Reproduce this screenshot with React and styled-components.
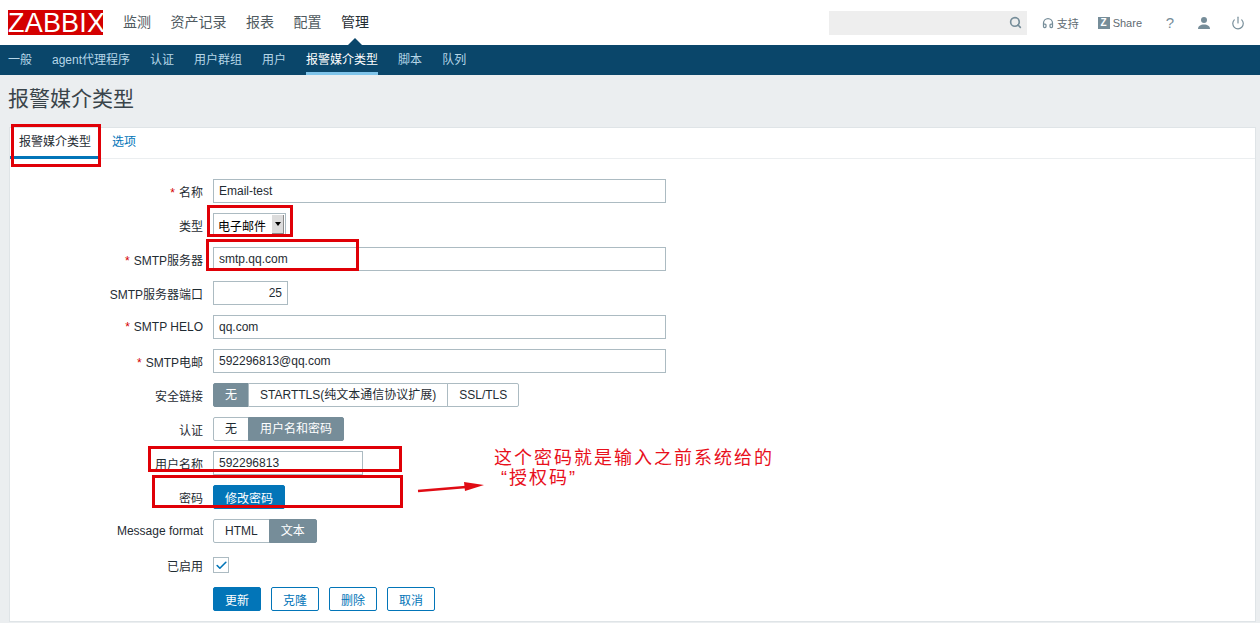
import React from "react";
import styled, { createGlobalStyle } from "styled-components";
import { Search, Headphones, Power, Check } from "lucide-react";

const GlobalStyle = createGlobalStyle`
  html, body {
    margin: 0;
    height: 623px;
    overflow: hidden;
    background: #ebeef0;
    font-family: "Liberation Sans", "Noto Sans CJK SC", sans-serif;
    font-size: 12px;
    color: #1f2c33;
  }
  * { box-sizing: border-box; }
`;

const Page = styled.div`
  position: relative;
  width: 1260px;
  height: 623px;
  overflow: hidden;
`;

const TopBar = styled.header`
  height: 45px;
  background: #fff;
  display: flex;
  align-items: center;
  padding: 0 12px 0 8px;
`;
const Logo = styled.div`
  width: 95px;
  height: 25px;
  margin-top: -1px;
  background: #d40000;
  color: #fff;
  font-size: 27px;
  line-height: 26px;
  letter-spacing: 0.2px;
  text-align: center;
  overflow: hidden;
`;
const MainMenu = styled.nav`
  display: flex;
  gap: 19.5px;
  margin-left: 20px;
`;
const MainItem = styled.a`
  position: relative;
  font-size: 14px;
  line-height: 45px;
  color: ${p => (p.$active ? "#1f2c33" : "#4f5a60")};
  ${p =>
    p.$active &&
    `&::after {
      content: "";
      position: absolute;
      left: 50%;
      bottom: 0;
      margin-left: -7px;
      border: 7px solid transparent;
      border-top: 0;
      border-bottom-color: #0a466a;
    }`}
`;
const TopRight = styled.div`
  margin-left: auto;
  display: flex;
  align-items: center;
`;
const SearchBox = styled.div`
  width: 198px;
  height: 24px;
  background: #eeeeee;
  display: flex;
  align-items: center;
  justify-content: flex-end;
  padding-right: 5px;
  color: #768d99;
  margin-right: 15px;
`;
const HeadLink = styled.a`
  display: flex;
  align-items: center;
  gap: 3px;
  font-size: 11px;
  color: #768d99;
  margin-right: ${p => p.$gap}px;
  span { color: #5f6b72; }
`;
const ZBadge = styled.i`
  width: 12px;
  height: 12px;
  background: #768d99;
  color: #fff;
  font-style: normal;
  font-weight: bold;
  font-size: 10px;
  line-height: 12px;
  text-align: center;
`;
const HeadIcon = styled.a`
  width: 20px;
  display: flex;
  justify-content: center;
  color: #768d99;
  font-size: 15px;
  margin-left: ${p => p.$gap || 0}px;
`;

const SubBar = styled.nav`
  height: 30px;
  background: #0a466a;
  display: flex;
  gap: 20px;
  padding-left: 8px;
`;
const SubItem = styled.a`
  font-size: 12px;
  line-height: 30px;
  height: 30px;
  color: ${p => (p.$active ? "#fff" : "#b5d6e8")};
  border-bottom: 3px solid ${p => (p.$active ? "#7fc4ea" : "transparent")};
`;

const Title = styled.h1`
  margin: 0;
  padding: 11px 0 0 8px;
  height: 52px;
  font-size: 21px;
  line-height: 26px;
  font-weight: normal;
  color: #3a444a;
`;

const Card = styled.section`
  margin-left: 9px;
  margin-right: 4px;
  height: 495px;
  background: #fff;
  border: 1px solid #dfe4e7;
`;
const Tabs = styled.div`
  height: 31px;
  display: flex;
  border-bottom: 1px solid #ebeef0;
`;
const Tab = styled.a`
  height: 31px;
  padding: 0 9px;
  margin-right: 3px;
  line-height: 29px;
  font-size: 12px;
  color: ${p => (p.$active ? "#1f2c33" : "#0275b8")};
  border-bottom: 3px solid ${p => (p.$active ? "#0275b8" : "transparent")};
`;
const Form = styled.div`
  padding-top: 15px;
  display: flex;
  flex-direction: column;
`;
const Row = styled.div`
  display: grid;
  grid-template-columns: 193px 1fr;
  column-gap: 10px;
  align-items: center;
  height: 34px;
`;
const Label = styled.label`
  text-align: right;
  font-size: 12px;
  color: #1f2c33;
`;
const Req = styled.span`
  color: #d40000;
  margin-right: 4px;
`;
const Input = styled.div`
  width: ${p => p.$w || 453}px;
  height: 24px;
  border: 1px solid #acbbc2;
  padding: 0 5px;
  font-size: 12px;
  line-height: 22px;
  color: #1f2c33;
  text-align: ${p => (p.$right ? "right" : "left")};
`;
const SelectBox = styled.div`
  width: 73px;
  height: 24px;
  border: 1px solid #acbbc2;
  display: flex;
  align-items: center;
  justify-content: space-between;
  padding: 1px 1px 1px 4px;
  font-size: 12px;
  color: #000;
`;
const SelectArrow = styled.i`
  width: 12px;
  height: 20px;
  background: #dcdcdc;
  border-right: 1px solid #8a8a8a;
  border-bottom: 2px solid #8a8a8a;
  display: flex;
  align-items: center;
  justify-content: center;
  &::before {
    content: "";
    border: 3px solid transparent;
    border-top: 4px solid #000;
    border-bottom: 0;
  }
`;
const Segments = styled.div`
  display: flex;
`;
const Segment = styled.span`
  height: 24px;
  padding: 0 ${p => p.$pad || 11}px;
  line-height: 22px;
  font-size: 12px;
  border: 1px solid ${p => (p.$on ? "#768d99" : "#acbbc2")};
  margin-left: -1px;
  background: ${p => (p.$on ? "#768d99" : "#fff")};
  color: ${p => (p.$on ? "#fff" : "#1f2c33")};
  &:first-child { margin-left: 0; border-radius: 2px 0 0 2px; }
  &:last-child { border-radius: 0 2px 2px 0; }
`;
const PrimaryBtn = styled.button`
  height: 24px;
  width: ${p => p.$w}px;
  padding: 0;
  font: inherit;
  font-size: 12px;
  border: 1px solid #0275b8;
  border-radius: 2px;
  background: #0275b8;
  color: #fff;
`;
const OutlineBtn = styled(PrimaryBtn)`
  background: #fff;
  color: #0275b8;
`;
const Actions = styled.div`
  display: flex;
  gap: 10px;
`;
const CheckBox = styled.span`
  width: 16px;
  height: 16px;
  border: 1px solid #acbbc2;
  display: flex;
  align-items: center;
  justify-content: center;
  color: #0275b8;
`;

// red marks someone drew over the screenshot
const Mark = styled.div`
  position: absolute;
  left: ${p => p.$x}px;
  top: ${p => p.$y}px;
  width: ${p => p.$w}px;
  height: ${p => p.$h}px;
  border: 3px solid #e00007;
  pointer-events: none;
`;
const Note = styled.div`
  position: absolute;
  left: 494px;
  top: 448px;
  width: 300px;
  font-size: 18px;
  line-height: 20px;
  letter-spacing: 2px;
  color: #e8101c;
`;
const NoteSecond = styled.div`
  padding-left: 7px;
`;
const Arrow = styled.svg`
  position: absolute;
  left: 416px;
  top: 478px;
`;

const subItems = ["一般", "agent代理程序", "认证", "用户群组", "用户", "报警媒介类型", "脚本", "队列"];

export default function App() {
  return (
    <Page>
      <GlobalStyle />
      <TopBar>
        <Logo>ZABBIX</Logo>
        <MainMenu>
          <MainItem>监测</MainItem>
          <MainItem>资产记录</MainItem>
          <MainItem>报表</MainItem>
          <MainItem>配置</MainItem>
          <MainItem $active>管理</MainItem>
        </MainMenu>
        <TopRight>
          <SearchBox>
            <Search size={13} strokeWidth={3} />
          </SearchBox>
          <HeadLink $gap={19}>
            <Headphones size={12} strokeWidth={2.5} />
            <span>支持</span>
          </HeadLink>
          <HeadLink $gap={18}>
            <ZBadge>Z</ZBadge>
            <span>Share</span>
          </HeadLink>
          <HeadIcon>?</HeadIcon>
          <HeadIcon $gap={14}>
            <svg width="14" height="14" viewBox="0 0 14 14" fill="currentColor">
              <circle cx="7" cy="4" r="3" />
              <path d="M1 13c0-3 2.500-4.500 6-4.500s6 1.500 6 4.500z" />
            </svg>
          </HeadIcon>
          <HeadIcon $gap={14}>
            <Power size={14} strokeWidth={2} />
          </HeadIcon>
        </TopRight>
      </TopBar>
      <SubBar>
        {subItems.map(item => (
          <SubItem key={item} $active={item === "报警媒介类型"}>
            {item}
          </SubItem>
        ))}
      </SubBar>
      <Title>报警媒介类型</Title>
      <Card>
        <Tabs>
          <Tab $active>报警媒介类型</Tab>
          <Tab>选项</Tab>
        </Tabs>
        <Form>
          <Row>
            <Label>
              <Req>*</Req>名称
            </Label>
            <Input>Email-test</Input>
          </Row>
          <Row>
            <Label>类型</Label>
            <SelectBox>
              电子邮件
              <SelectArrow />
            </SelectBox>
          </Row>
          <Row>
            <Label>
              <Req>*</Req>SMTP服务器
            </Label>
            <Input>smtp.qq.com</Input>
          </Row>
          <Row>
            <Label>SMTP服务器端口</Label>
            <Input $w={75} $right>
              25
            </Input>
          </Row>
          <Row>
            <Label>
              <Req>*</Req>SMTP HELO
            </Label>
            <Input>qq.com</Input>
          </Row>
          <Row>
            <Label>
              <Req>*</Req>SMTP电邮
            </Label>
            <Input>592296813@qq.com</Input>
          </Row>
          <Row>
            <Label>安全链接</Label>
            <Segments>
              <Segment $on>无</Segment>
              <Segment>STARTTLS(纯文本通信协议扩展)</Segment>
              <Segment>SSL/TLS</Segment>
            </Segments>
          </Row>
          <Row>
            <Label>认证</Label>
            <Segments>
              <Segment>无</Segment>
              <Segment $on>用户名和密码</Segment>
            </Segments>
          </Row>
          <Row>
            <Label>用户名称</Label>
            <Input $w={150}>592296813</Input>
          </Row>
          <Row>
            <Label>密码</Label>
            <PrimaryBtn $w={72}>修改密码</PrimaryBtn>
          </Row>
          <Row>
            <Label>Message format</Label>
            <Segments>
              <Segment>HTML</Segment>
              <Segment $on>文本</Segment>
            </Segments>
          </Row>
          <Row>
            <Label>已启用</Label>
            <CheckBox>
              <Check size={13} strokeWidth={3} />
            </CheckBox>
          </Row>
          <Row>
            <span />
            <Actions>
              <PrimaryBtn $w={48}>更新</PrimaryBtn>
              <OutlineBtn $w={48}>克隆</OutlineBtn>
              <OutlineBtn $w={48}>删除</OutlineBtn>
              <OutlineBtn $w={48}>取消</OutlineBtn>
            </Actions>
          </Row>
        </Form>
      </Card>

      <Mark $x={11} $y={124} $w={90} $h={43} />
      <Mark $x={207} $y={205} $w={86} $h={32} />
      <Mark $x={206} $y={239} $w={153} $h={32} />
      <Mark $x={148} $y={446} $w={254} $h={26} />
      <Mark $x={152} $y={475} $w={251} $h={33} />
      <Arrow width="70" height="20" viewBox="0 0 70 20">
        <path d="M2 13 L50 9" stroke="#e00c14" strokeWidth="2.500" />
        <path d="M48 4 L68 7 L49 13 z" fill="#e00c14" />
      </Arrow>
      <Note>
        这个密码就是输入之前系统给的
        <NoteSecond>“授权码”</NoteSecond>
      </Note>
    </Page>
  );
}
